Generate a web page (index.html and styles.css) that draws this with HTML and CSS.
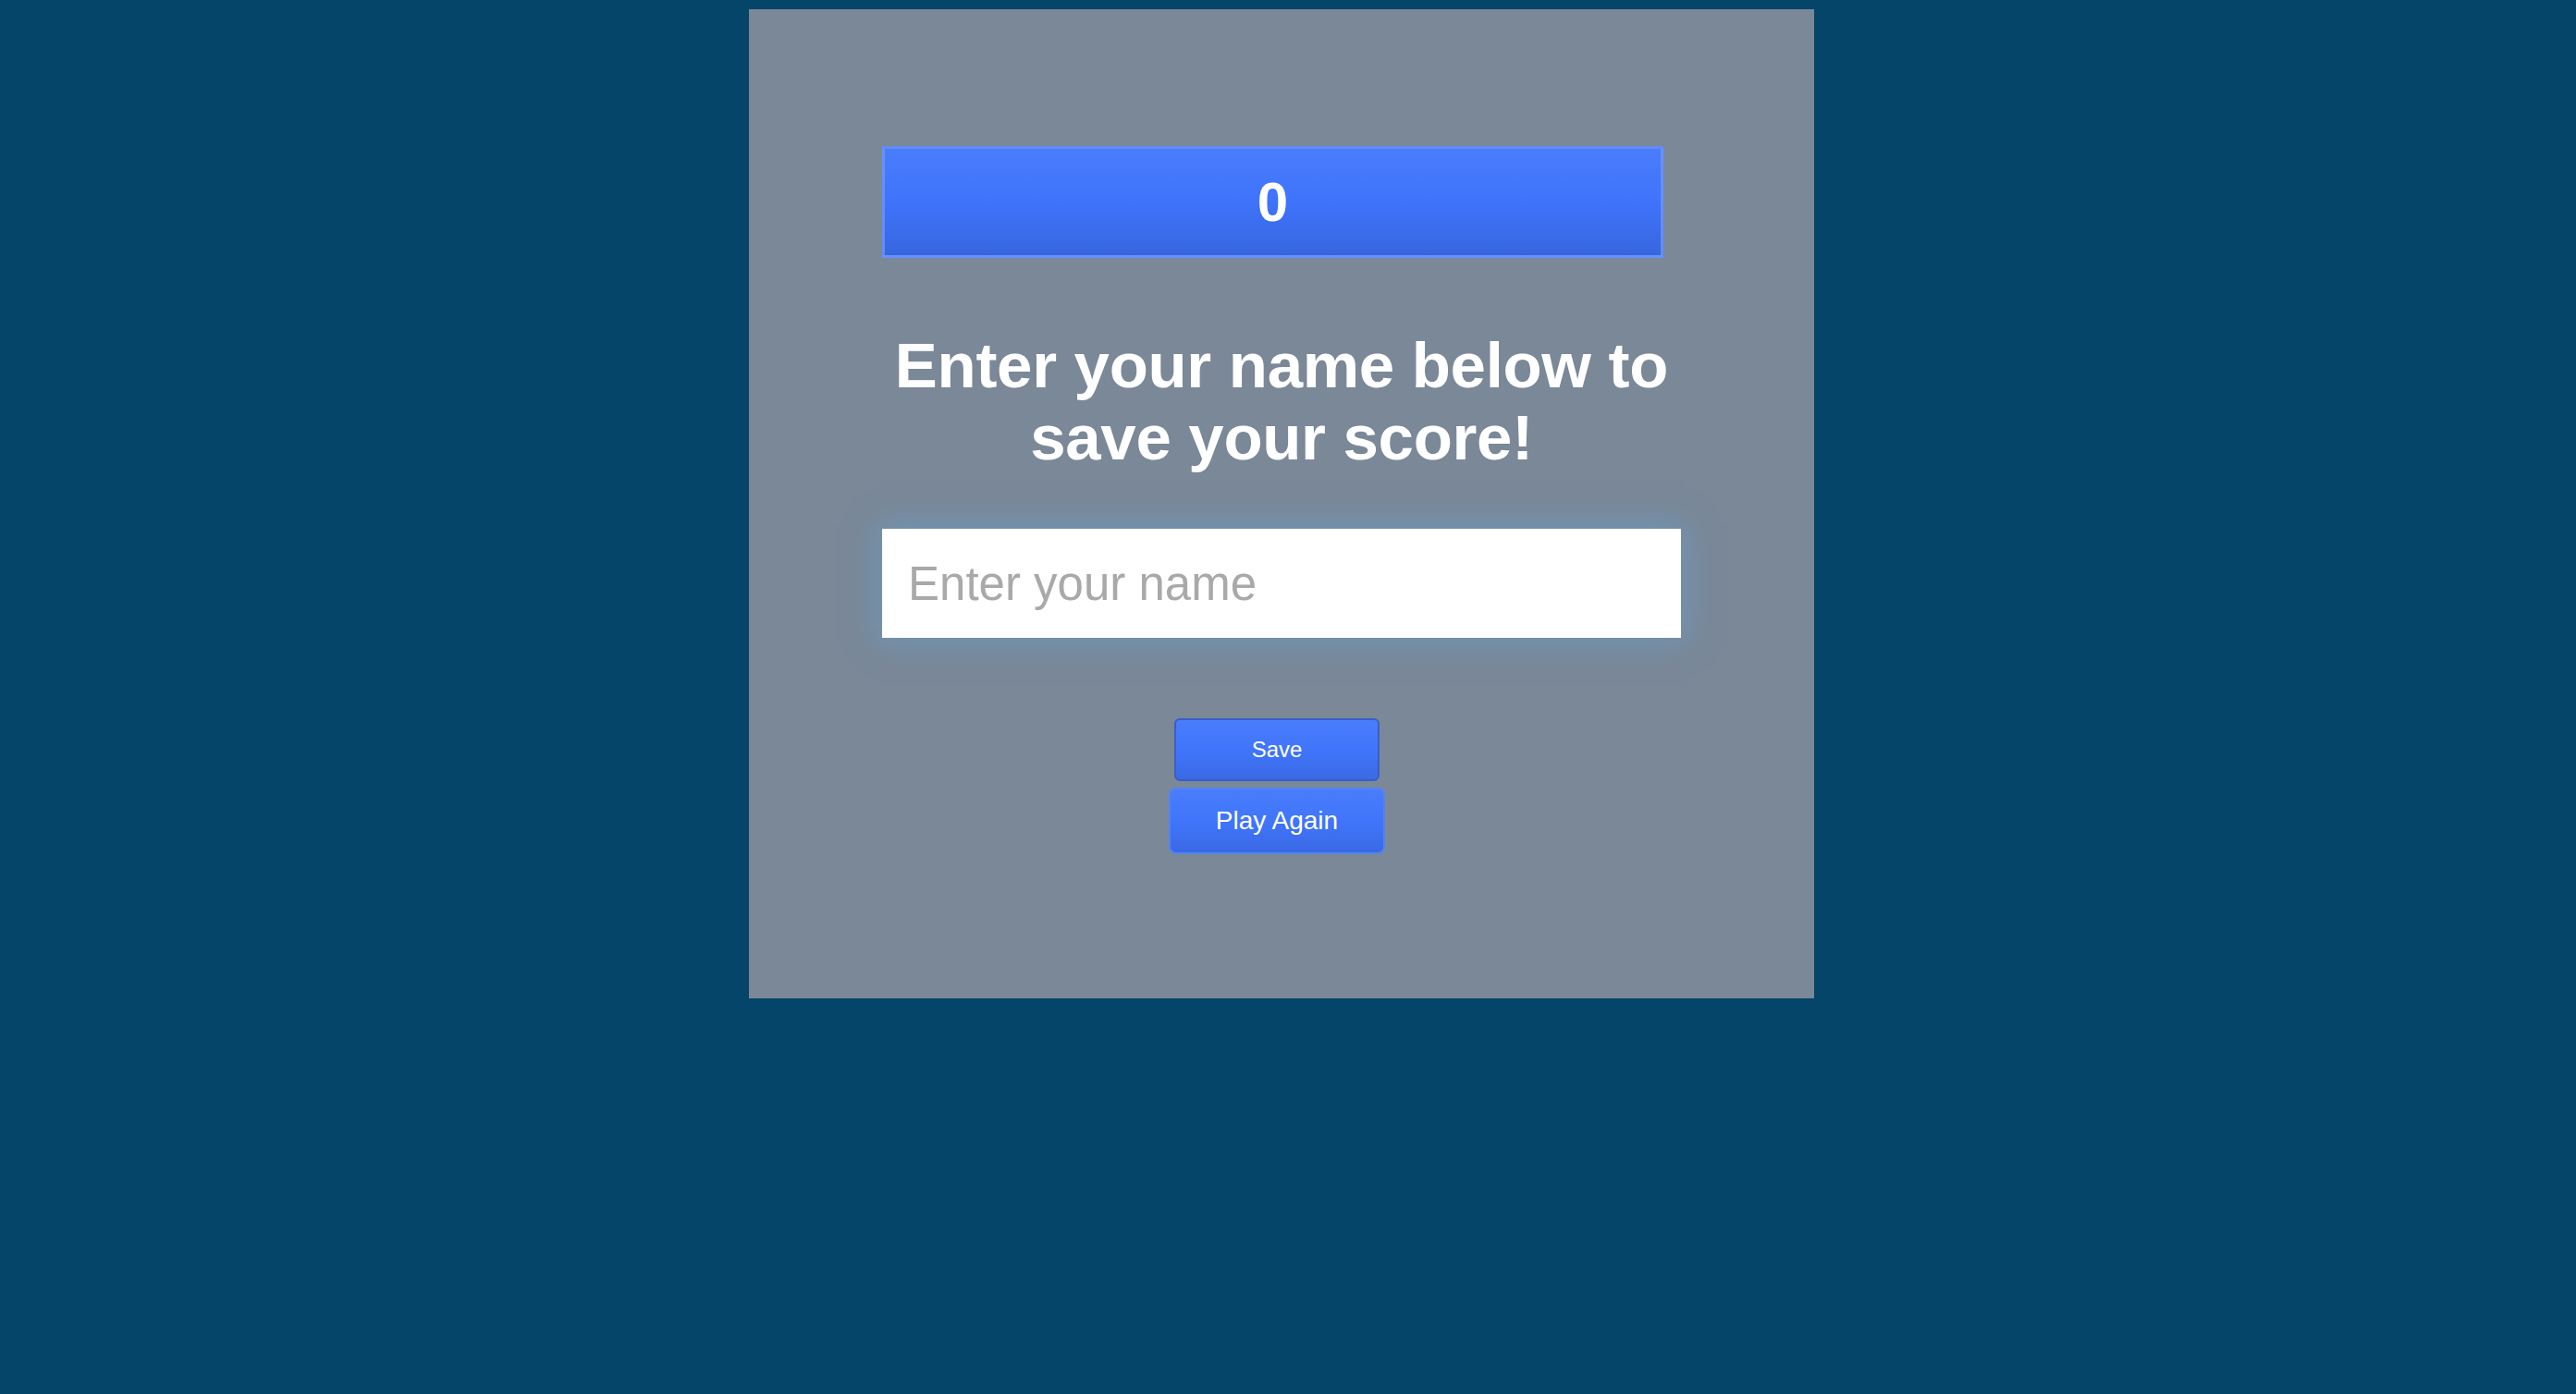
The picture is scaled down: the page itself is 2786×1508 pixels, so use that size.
FILE: index.html
```html
<!DOCTYPE html>
<html lang="en">
<head>
<meta charset="utf-8">
<title>Save your score</title>
<link rel="stylesheet" href="styles.css">
</head>
<body>
<div class="page">
  <main class="card">
    <div class="score">0</div>
    <h1 class="title">Enter your name below to save your score!</h1>
    <input class="name-input" type="text" placeholder="Enter your name">
    <div class="actions">
      <button class="btn btn-save" type="button">Save</button>
      <button class="btn btn-play" type="button">Play Again</button>
    </div>
  </main>
</div>
</body>
</html>
```

FILE: styles.css
```css
html, body {
  margin: 0;
  padding: 0;
  background: #06456a;
  height: 100%;
}

body {
  font-family: "Liberation Sans", Arial, Helvetica, sans-serif;
  color: #fff;
}

.page {
  display: flex;
  justify-content: center;
  padding-top: 10px;
  padding-right: 14px;
}

.card {
  box-sizing: border-box;
  width: 1152px;
  height: 1070px;
  background: #7a8898;
  padding: 148px 0 0 144px;
  display: flex;
  flex-direction: column;
  align-items: flex-start;
}

.score {
  box-sizing: border-box;
  width: 845px;
  height: 121px;
  border: 3px solid rgba(112, 152, 255, 0.75);
  background: linear-gradient(180deg, #4a7dfc 0%, #3f73fb 50%, #3766df 100%);
  display: flex;
  align-items: center;
  justify-content: center;
  font-size: 60px;
  font-weight: bold;
  color: #fff;
}

.title {
  width: 864px;
  margin: 78px 0 0 0;
  font-size: 69px;
  line-height: 78px;
  letter-spacing: -0.3px;
  font-weight: bold;
  text-align: center;
  color: #fff;
}

.name-input {
  box-sizing: border-box;
  width: 864px;
  height: 118px;
  margin-top: 59px;
  padding: 0 28px;
  border: none;
  outline: none;
  background: #fff;
  font-family: "Liberation Sans", Arial, Helvetica, sans-serif;
  font-size: 51px;
  color: #333;
  box-shadow: 0 0 32px 4px rgba(100, 168, 220, 0.5);
}

.name-input::placeholder {
  color: #a9a9a9;
}

.actions {
  box-sizing: border-box;
  width: 864px;
  margin-top: 87px;
  padding-right: 10px;
  display: flex;
  flex-direction: column;
  align-items: center;
  gap: 7px;
}

.btn {
  box-sizing: border-box;
  font-family: "Liberation Sans", Arial, Helvetica, sans-serif;
  color: #fff;
  background: linear-gradient(180deg, #4a7dfc 0%, #4075fb 50%, #3a69e4 100%);
  cursor: pointer;
  padding: 0;
}

.btn-save {
  width: 222px;
  height: 68px;
  font-size: 24px;
  border: 2px solid #3a5ec6;
  border-radius: 6px;
}

.btn-play {
  width: 234px;
  height: 72px;
  font-size: 28px;
  border: 2px solid #5283f6;
  border-radius: 8px;
}
```
